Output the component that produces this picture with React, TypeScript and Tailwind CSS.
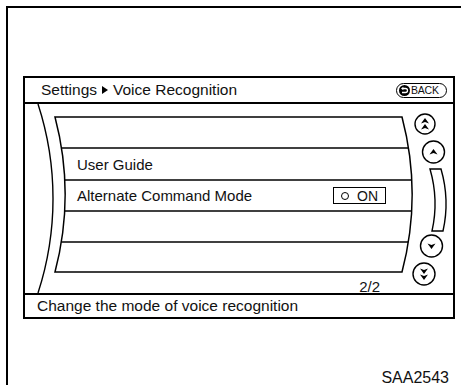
import React from 'react';

const R = 305;

// x of an arc of radius R whose rightmost point is at (peakX, midY)
function arcX(peakX: number, midY: number, y: number) {
  return peakX - R + Math.sqrt(R * R - (y - midY) * (y - midY));
}

function Arrowhead({ x, y, down = false }: { x: number; y: number; down?: boolean }) {
  return (
    <path
      d="M-4 2.5 L0 -3 L4 2.5 L0 1 Z"
      transform={`translate(${x} ${y}) ${down ? 'rotate(180)' : ''}`}
      fill="black"
    />
  );
}

function ListArt() {
  const rowLines = [44, 76, 107, 138];
  return (
    <svg className="absolute inset-0" width="428" height="189" viewBox="0 0 428 189" fill="none">
      {/* outer bezel arc */}
      <path d="M13 0 A305 305 0 0 1 13 189" stroke="black" strokeWidth="1.4" />
      {/* list panel */}
      <path
        d="M30 13 L377 13 A305 305 0 0 1 377 168 L30 168 A305 305 0 0 0 30 13 Z"
        stroke="black"
        strokeWidth="1.5"
      />
      {rowLines.map((y) => (
        <line
          key={y}
          x1={arcX(40, 90.5, y)}
          x2={arcX(387, 90.5, y)}
          y1={y}
          y2={y}
          stroke="black"
          strokeWidth="1.4"
        />
      ))}

      {/* scroll buttons */}
      <circle cx="400" cy="20" r="10" stroke="black" strokeWidth="1.4" />
      <Arrowhead x={400} y={17} />
      <Arrowhead x={400} y={23} />

      <circle cx="408.5" cy="48" r="11" stroke="black" strokeWidth="1.4" />
      <Arrowhead x={408.5} y={48} />

      <path d="M405 65 Q414 96 407 127 L418 127 Q425 96 416 65 Z" stroke="black" strokeWidth="1.4" />

      <circle cx="406.5" cy="142" r="11" stroke="black" strokeWidth="1.4" />
      <Arrowhead x={406.5} y={142} down />

      <circle cx="399" cy="170" r="11" stroke="black" strokeWidth="1.4" />
      <Arrowhead x={399} y={167} down />
      <Arrowhead x={399} y={173} down />
    </svg>
  );
}

function BackButton() {
  return (
    <div className="flex items-center gap-[1px] w-[51px] h-[15px] rounded-full border-[1.5px] border-black pl-[2px]">
      <svg width="11" height="11" viewBox="0 0 11 11">
        <circle cx="5.5" cy="5.5" r="5.5" fill="black" />
        <path d="M4 3.5 H6.5 A2 2 0 0 1 6.5 7.5 H3" stroke="white" strokeWidth="1.3" fill="none" />
        <path d="M2 3.5 L4.3 1.8 L4.3 5.2 Z" fill="white" />
      </svg>
      <span className="text-[10.5px] leading-none tracking-[-0.2px]">BACK</span>
    </div>
  );
}

export default function App() {
  return (
    <div className="w-[461px] h-[385px] bg-white overflow-hidden text-[#111] font-['Liberation_Sans',Arial,sans-serif]">
      <div className="ml-[6px] mt-[6px] h-[379px] border-l-2 border-t-2 border-black pl-[15px] pt-[68px]">
        {/* Screen */}
        <div className="w-[432px] border-2 border-black flex flex-col">
          {/* Header */}
          <div className="h-[26px] border-b-2 border-black flex items-center justify-between pl-[16px] pr-[6px]">
            <div className="flex items-center text-[15.5px] leading-none">
              <span>Settings</span>
              <svg className="mx-[5px]" width="6" height="8" viewBox="0 0 6 8">
                <path d="M0 0 L6 4 L0 8 Z" fill="black" />
              </svg>
              <span>Voice Recognition</span>
            </div>
            <BackButton />
          </div>

          {/* List */}
          <div className="relative h-[189px]">
            <ListArt />
            <div className="relative flex flex-col pt-[13px] pl-[52px] w-[361px] text-[15px] leading-none">
              <div className="h-[31px]" />
              <div className="h-[32px] flex items-center">User Guide</div>
              <div className="h-[31px] flex items-center">
                <span>Alternate Command Mode</span>
                <div className="ml-auto w-[53px] h-[17px] border-[1.5px] border-black flex items-center pl-[7px] gap-[8px]">
                  <span className="w-[8px] h-[8px] rounded-full border-[1.5px] border-black" />
                  <span className="text-[14px]">ON</span>
                </div>
              </div>
              <div className="h-[31px]" />
              <div className="h-[30px]" />
              <div className="flex justify-end pr-[6px] pt-[7px] text-[15px]">2/2</div>
            </div>
          </div>

          {/* Status */}
          <div className="h-[24px] border-t-2 border-black flex items-center pl-[12px] text-[15.5px] leading-none">
            Change the mode of voice recognition
          </div>
        </div>

        <div className="flex justify-end pr-[12px] mt-[51px] text-[16px] leading-none">SAA2543</div>
      </div>
    </div>
  );
}
